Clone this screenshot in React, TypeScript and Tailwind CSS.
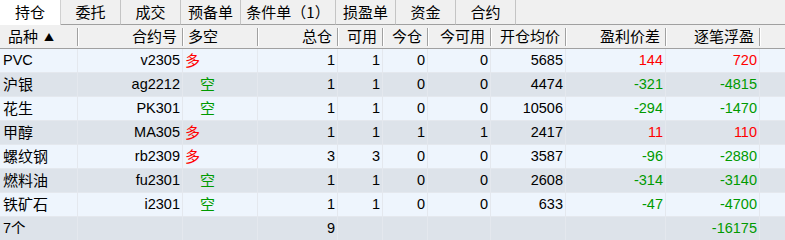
import React from "react";

const cjk = "font-['Noto_Sans_CJK_SC',sans-serif]";
const latin = "font-['Liberation_Sans','Noto_Sans_CJK_SC',sans-serif]";

const tabs = [
  { label: "持仓", w: "w-[61px]", active: true },
  { label: "委托", w: "w-[60px]" },
  { label: "成交", w: "w-[60px]" },
  { label: "预备单", w: "w-[60px]" },
  { label: "条件单（1）", w: "w-[95px]" },
  { label: "损盈单", w: "w-[60px]" },
  { label: "资金", w: "w-[60px]" },
  { label: "合约", w: "w-[60px]" },
];

const widths = [
  "w-[78px]",
  "w-[105px]",
  "w-[75px]",
  "w-[80px]",
  "w-[45px]",
  "w-[45px]",
  "w-[63px]",
  "w-[75px]",
  "w-[100px]",
  "w-[94px]",
];

const headers = ["品种", "合约号", "多空", "总仓", "可用", "今仓", "今可用", "开仓均价", "盈利价差", "逐笔浮盈"];

type Pos = {
  name: string;
  code: string;
  side: "多" | "空";
  total: number;
  avail: number;
  today: number;
  todayAvail: number;
  price: number;
  diff: number;
  pnl: number;
};

const positions: Pos[] = [
  { name: "PVC", code: "v2305", side: "多", total: 1, avail: 1, today: 0, todayAvail: 0, price: 5685, diff: 144, pnl: 720 },
  { name: "沪银", code: "ag2212", side: "空", total: 1, avail: 1, today: 0, todayAvail: 0, price: 4474, diff: -321, pnl: -4815 },
  { name: "花生", code: "PK301", side: "空", total: 1, avail: 1, today: 0, todayAvail: 0, price: 10506, diff: -294, pnl: -1470 },
  { name: "甲醇", code: "MA305", side: "多", total: 1, avail: 1, today: 1, todayAvail: 1, price: 2417, diff: 11, pnl: 110 },
  { name: "螺纹钢", code: "rb2309", side: "多", total: 3, avail: 3, today: 0, todayAvail: 0, price: 3587, diff: -96, pnl: -2880 },
  { name: "燃料油", code: "fu2301", side: "空", total: 1, avail: 1, today: 0, todayAvail: 0, price: 2608, diff: -314, pnl: -3140 },
  { name: "铁矿石", code: "i2301", side: "空", total: 1, avail: 1, today: 0, todayAvail: 0, price: 633, diff: -47, pnl: -4700 },
];

const pnlColor = (v: number) => (v < 0 ? "text-[#009a00]" : "text-[#ff0000]");

function Cell({ i, children, className = "" }: { i: number; children?: React.ReactNode; className?: string }) {
  return (
    <div className={`${widths[i]} shrink-0 h-full border-r border-[#e4e8ee] flex items-center overflow-hidden whitespace-nowrap ${className}`}>
      {children}
    </div>
  );
}

function Num({ i, v, color = "text-black" }: { i: number; v?: number | string; color?: string }) {
  return (
    <Cell i={i} className={`justify-end pr-[2px] ${latin} text-[14.5px] ${color}`}>
      {v}
    </Cell>
  );
}

export default function App() {
  return (
    <div className="w-[785px] h-[240px] overflow-hidden bg-[#eef4fc] select-none">
      {/* Tabs */}
      <div className="flex h-[25px] bg-[#f0f0f0]">
        {tabs.map((t) => (
          <div
            key={t.label}
            className={`${t.w} shrink-0 flex items-center justify-center ${cjk} text-[15px] text-black border-r ${
              t.active ? "bg-white border-[#d0d0d0]" : "border-b border-r-[#c4c4c4] border-b-[#a0a0a0]"
            }`}
          >
            {t.label}
          </div>
        ))}
        <div className="flex-1 border-b border-[#a0a0a0]" />
      </div>

      {/* Header */}
      <div className={`flex items-center h-[24px] bg-[#f0f0f0] border-b border-[#a0a0a0] ${cjk} text-[15px] text-black`}>
        {headers.map((h, i) => (
          <div
            key={h}
            className={`${widths[i]} shrink-0 h-[18px] flex items-center border-r border-[#a0a0a0] shadow-[1px_0_0_#ffffff] ${
              i === 0 ? "pl-[8px]" : i === 2 ? "pl-[5px]" : "justify-end pr-[5px]"
            }`}
          >
            {h}
            {i === 0 && <span className="ml-[6px] text-[10px] leading-none">▲</span>}
          </div>
        ))}
        <div className="flex-1" />
      </div>

      {/* Rows */}
      {positions.map((p, r) => (
        <div
          key={p.code}
          className={`flex h-[24px] border-b border-[#e4e8ee] ${r % 2 === 0 ? "bg-[#eef5fd]" : "bg-[#dde3ea]"}`}
        >
          <Cell i={0} className={`pl-[3px] text-black ${p.name === "PVC" ? `${latin} text-[14.5px]` : `${cjk} text-[15px]`}`}>
            {p.name}
          </Cell>
          <Num i={1} v={p.code} />
          <Cell
            i={2}
            className={`${cjk} text-[15px] ${p.side === "多" ? "pl-[2px] text-[#ff0000]" : "pl-[17px] text-[#009a00]"}`}
          >
            {p.side}
          </Cell>
          <Num i={3} v={p.total} />
          <Num i={4} v={p.avail} />
          <Num i={5} v={p.today} />
          <Num i={6} v={p.todayAvail} />
          <Num i={7} v={p.price} />
          <Num i={8} v={p.diff} color={pnlColor(p.diff)} />
          <Num i={9} v={p.pnl} color={pnlColor(p.pnl)} />
          <div className="flex-1" />
        </div>
      ))}

      {/* Total */}
      <div className="flex h-[24px] border-b border-[#e4e8ee] bg-[#dde3ea]">
        <Cell i={0} className={`pl-[3px] ${latin} text-[14.5px] text-black`}>
          7个
        </Cell>
        <Cell i={1} />
        <Cell i={2} />
        <Num i={3} v={9} />
        <Cell i={4} />
        <Cell i={5} />
        <Cell i={6} />
        <Cell i={7} />
        <Cell i={8} />
        <Num i={9} v={-16175} color="text-[#009a00]" />
        <div className="flex-1" />
      </div>
    </div>
  );
}
